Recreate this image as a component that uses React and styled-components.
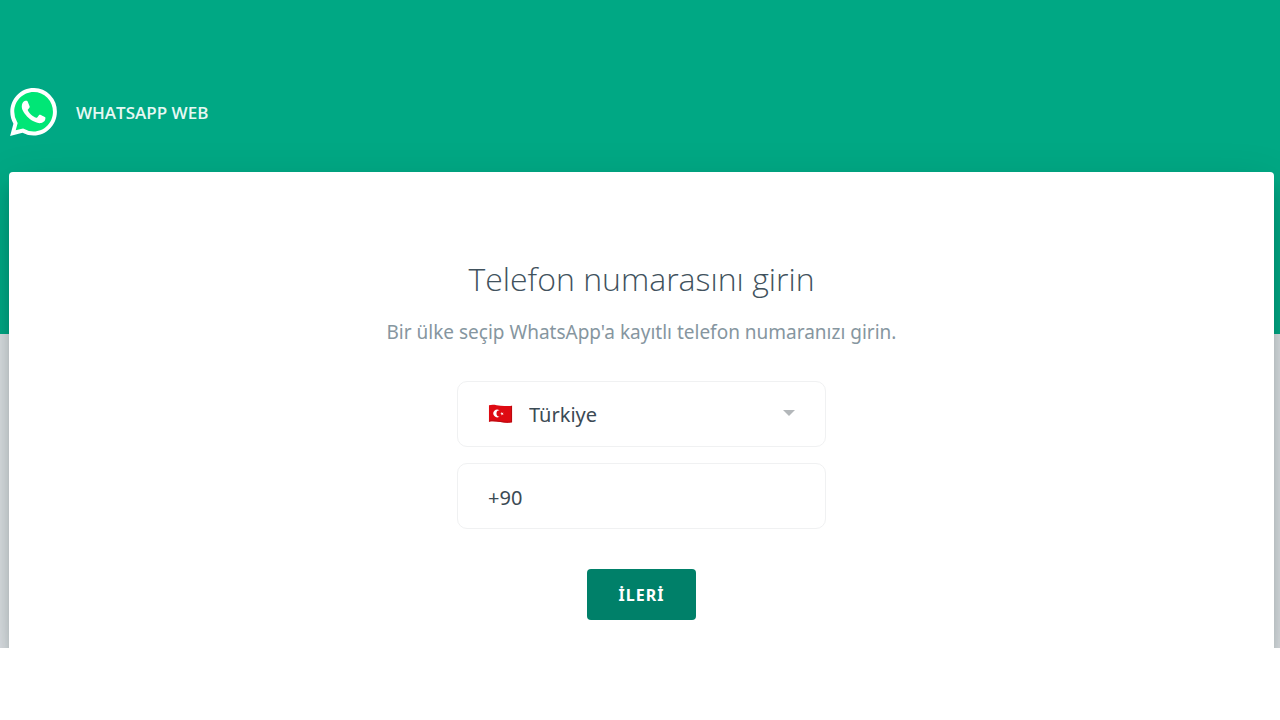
import React, { useState } from "react";
import styled, { createGlobalStyle } from "styled-components";

const GlobalStyle = createGlobalStyle`
  *, *::before, *::after { box-sizing: border-box; }
  body {
    margin: 0;
    background: #ffffff;
    font-family: "Open Sans", "Noto Sans", sans-serif;
  }
`;

const Page = styled.div`
  display: flex;
  flex-direction: column;
  padding: 88px 6px 0 9px;
  overflow: hidden;
  background: linear-gradient(#00a884 0 334px, #dadfe2 334px);
`;

const Header = styled.header`
  display: flex;
  align-items: center;
  gap: 19px;
  margin-bottom: 36px;
  padding-left: 1px;
`;

const Brand = styled.span`
  padding-top: 2px;
  color: #e6f8f3;
  font-size: 17px;
  font-weight: 600;
  line-height: 24px;
`;

const Card = styled.main`
  display: flex;
  flex-direction: column;
  align-items: center;
  padding: 80px 24px 28px;
  background: #ffffff;
  border-radius: 4px 4px 0 0;
  box-shadow: 0 16px 48px rgba(11, 20, 26, 0.16), 0 16px 12px rgba(11, 20, 26, 0.16);
`;

const Title = styled.h1`
  margin: 0;
  padding-top: 2px;
  color: #41525d;
  font-size: 32px;
  font-weight: 300;
  line-height: 50px;
`;

const Subtitle = styled.p`
  margin: 14px 0 35px;
  color: #8696a0;
  font-family: "Noto Sans", sans-serif;
  font-size: 19px;
  line-height: 28px;
`;

const Form = styled.form`
  display: flex;
  flex-direction: column;
  align-items: center;
  width: 100%;
  max-width: 369px;
`;

const Field = styled.label`
  display: flex;
  align-items: center;
  gap: 16px;
  width: 100%;
  height: 66px;
  margin-bottom: 16px;
  padding: 0 30px;
  border: 1px solid #f0f1f2;
  border-radius: 10px;
`;

const CountrySelect = styled.select`
  flex: 1;
  min-width: 0;
  padding: 2px 0 0;
  border: 0;
  outline: 0;
  appearance: none;
  background: transparent;
  color: #3b4a54;
  font-family: "Noto Sans", sans-serif;
  font-size: 20px;
  line-height: 28px;
`;

const PhoneInput = styled.input`
  flex: 1;
  min-width: 0;
  padding: 4px 0 0;
  border: 0;
  outline: 0;
  background: transparent;
  color: #3b4a54;
  font-family: "Noto Sans", sans-serif;
  font-size: 20px;
  line-height: 28px;
`;

const NextButton = styled.button`
  height: 51px;
  margin-top: 24px;
  padding: 0 32px;
  border: 0;
  border-radius: 4px;
  background: #008069;
  color: #ffffff;
  font-family: "Noto Sans", sans-serif;
  font-size: 16px;
  font-weight: 700;
  line-height: 24px;
  letter-spacing: 1px;
  cursor: pointer;
`;

function WhatsAppLogo() {
  return (
    <svg width="47" height="48" viewBox="0 0 24 24" preserveAspectRatio="none" aria-hidden="true">
      <path fill="#fff" d="M20.52 3.449A11.815 11.815 0 0 0 12.05 0C5.495 0 .16 5.335.157 11.892c0 2.096.547 4.142 1.588 5.945L.057 24l6.305-1.654a11.882 11.882 0 0 0 5.683 1.448h.005c6.554 0 11.89-5.335 11.893-11.893A11.821 11.821 0 0 0 20.52 3.449z" />
      <path fill="#00e676" d="M12.05 21.785h-.004a9.87 9.87 0 0 1-5.031-1.378l-.361-.214-3.741.982.998-3.648-.235-.374a9.86 9.86 0 0 1-1.51-5.26c.001-5.45 4.436-9.884 9.888-9.884a9.83 9.83 0 0 1 9.884 9.892c-.003 5.45-4.437 9.884-9.885 9.884z" />
      <path fill="#fff" d="M17.472 14.382c-.297-.149-1.758-.867-2.03-.967-.273-.099-.471-.148-.67.15-.197.297-.767.966-.94 1.164-.173.199-.347.223-.644.075-.297-.15-1.255-.463-2.39-1.475-.883-.788-1.48-1.761-1.653-2.059-.173-.297-.018-.458.13-.606.134-.133.298-.347.446-.52.149-.174.198-.298.298-.497.099-.198.05-.371-.025-.52-.075-.149-.669-1.612-.916-2.207-.242-.579-.487-.5-.669-.51-.173-.008-.371-.01-.57-.01-.198 0-.52.074-.792.372-.272.297-1.04 1.016-1.04 2.479 0 1.462 1.065 2.875 1.213 3.074.149.198 2.096 3.2 5.077 4.487.709.306 1.262.489 1.694.625.712.227 1.36.195 1.871.118.571-.085 1.758-.719 2.006-1.413.248-.694.248-1.289.173-1.413-.074-.124-.272-.198-.57-.347" />
    </svg>
  );
}

function TurkishFlag() {
  return (
    <svg width="25" height="24" viewBox="0 0 26 24" aria-hidden="true">
      <path fill="#de0a12" d="M1 3C5 1.500 9 3 13 3.300S21 4 25 3.500V20.500C21 21.500 17 20.700 13 20.300S5 19 1 20z" />
      <path fill="#b80a10" d="M1 19C5 18 9 19 13 19.300S21 20.500 25 19.500V20.500C21 21.500 17 20.700 13 20.300S5 19 1 20zM24 3.600 25 3.500V20.500L24 20.700z" />
      <path fill="#fff" d="M12 8.200A4 4 0 1 0 12 14.600A3.200 3.200 0 1 1 12 8.200z" />
      <path fill="#fff" d="M12.600 11.600 14 11.200V9.900L14.900 11 16.200 10.600 15.400 11.700 16.200 12.800 14.900 12.400 14 13.500V12.100z" />
    </svg>
  );
}

function Caret() {
  return (
    <svg width="12" height="10" viewBox="0 0 12 10" aria-hidden="true">
      <path fill="#b3b7ba" d="M0 1H12L6 7z" />
    </svg>
  );
}

export default function App() {
  const [phone, setPhone] = useState("+90");
  return (
    <>
      <GlobalStyle />
      <Page>
        <Header>
          <WhatsAppLogo />
          <Brand>WHATSAPP WEB</Brand>
        </Header>
        <Card>
          <Title>Telefon numarasını girin</Title>
          <Subtitle>Bir ülke seçip WhatsApp'a kayıtlı telefon numaranızı girin.</Subtitle>
          <Form onSubmit={(event) => event.preventDefault()}>
            <Field htmlFor="country">
              <TurkishFlag />
              <CountrySelect id="country" aria-label="Ülke" defaultValue="tr">
                <option value="tr">Türkiye</option>
              </CountrySelect>
              <Caret />
            </Field>
            <Field htmlFor="phone">
              <PhoneInput
                id="phone"
                type="tel"
                aria-label="Telefon numarası"
                value={phone}
                onChange={(event) => setPhone(event.target.value)}
              />
            </Field>
            <NextButton type="submit">İLERİ</NextButton>
          </Form>
        </Card>
      </Page>
    </>
  );
}
